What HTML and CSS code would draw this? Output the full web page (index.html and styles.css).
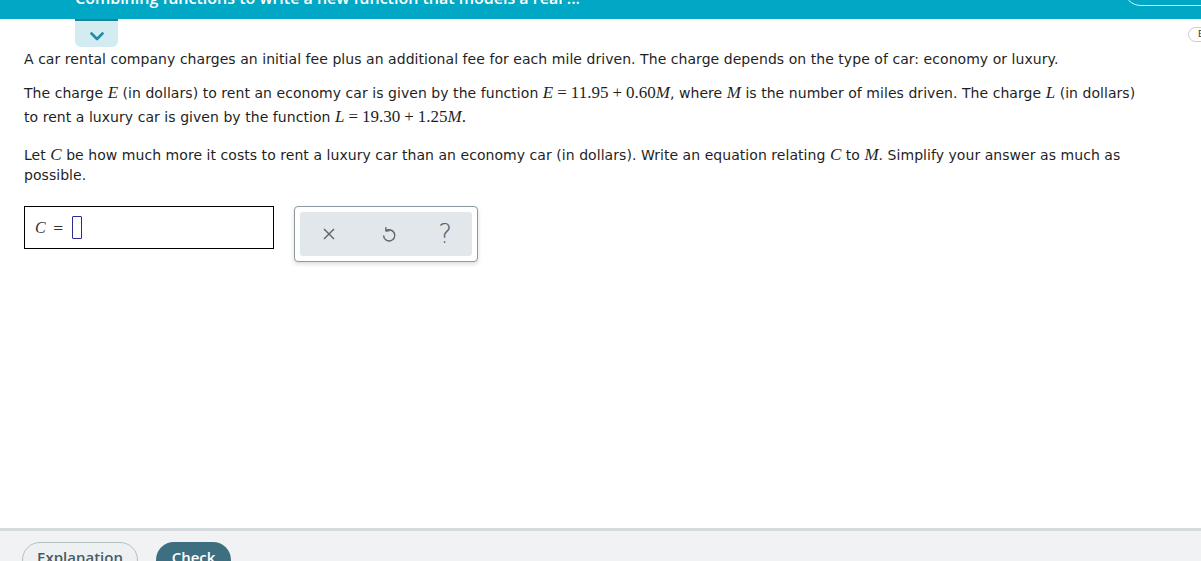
FILE: index.html
```html
<!DOCTYPE html>
<html>
<head>
<meta charset="utf-8">
<link rel="stylesheet" href="styles.css">
</head>
<body>
<div class="page">
  <header class="topbar">
    <div class="title">Combining functions to write a new function that models a real ...</div>
    <div class="top-pill"></div>
  </header>
  <main class="main">
    <div class="tab-row">
      <div class="tab">
        <svg width="14" height="9" viewBox="0 0 14 9"><path d="M1.5 1.5 L7 7 L12.5 1.5" fill="none" stroke="#1b8fa6" stroke-width="2.6" stroke-linecap="round" stroke-linejoin="round"/></svg>
      </div>
      <div class="side-pill">E</div>
    </div>
    <div class="question">
      <p class="p1">A car rental company charges an initial fee plus an additional fee for each mile driven. The charge depends on the type of car: economy or luxury.</p>
      <p class="p2">The charge <span class="m"><i>E</i></span> (in dollars) to rent an economy car is given by the function <span class="m"><i>E</i><span class="op">=</span>11.95<span class="op">+</span>0.60<i>M</i></span>, where <span class="m"><i>M</i></span> is the number of miles driven. The charge <span class="m"><i>L</i></span> (in dollars) to rent a luxury car is given by the function <span class="m"><i>L</i><span class="op">=</span>19.30<span class="op">+</span>1.25<i>M</i>.</span></p>
      <p class="p3">Let <span class="m"><i>C</i></span> be how much more it costs to rent a luxury car than an economy car (in dollars). Write an equation relating <span class="m"><i>C</i></span> to <span class="m"><i>M</i></span>. Simplify your answer as much as possible.</p>
    </div>
    <div class="answer-row">
      <div class="answer-box">
        <span class="m"><i>C</i></span><span class="eq">=</span><span class="cursor"></span>
      </div>
      <div class="tools">
        <div class="tools-inner">
          <svg width="14" height="14" viewBox="0 0 14 14"><path d="M2 2 L12 12 M12 2 L2 12" stroke="#55636b" stroke-width="1.4" fill="none"/></svg>
          <svg width="16" height="20" viewBox="0 0 16 20"><path d="M2.6 11.5 A5.6 5.6 0 1 0 4.9 6.9" stroke="#55636b" stroke-width="1.4" fill="none"/><path d="M4.9 3.2 L4.9 6.9 L8.5 6.9" stroke="#55636b" stroke-width="1.4" fill="none" stroke-linejoin="miter"/></svg>
          <span class="qmark">?</span>
        </div>
      </div>
    </div>
  </main>
  <footer class="footer">
    <button class="btn btn-expl">Explanation</button>
    <button class="btn btn-check">Check</button>
  </footer>
</div>
</body>
</html>
```

FILE: styles.css
```css
html, body {
  margin: 0;
  padding: 0;
  background: #ffffff;
}
body {
  width: 1201px;
  height: 561px;
  overflow: hidden;
}
.page {
  height: 561px;
  display: flex;
  flex-direction: column;
}
.topbar {
  height: 19px;
  background: #00a8c6;
  position: relative;
  overflow: hidden;
  flex: none;
}
.title {
  position: absolute;
  left: 75px;
  top: -13px;
  color: #ffffff;
  font-family: "Open Sans", sans-serif;
  font-size: 16px;
  font-weight: 600;
  line-height: 22px;
  white-space: nowrap;
}
.top-pill {
  position: absolute;
  left: 1123px;
  top: -30px;
  width: 120px;
  height: 34px;
  border: 1.5px solid #d8f3f8;
  border-radius: 18px;
}
.main {
  flex: 1;
  position: relative;
  font-family: "DejaVu Sans", Verdana, sans-serif;
  font-size: 14px;
  color: #1f1f1f;
}
.tab-row {
  height: 30px;
  position: relative;
}
.tab {
  position: absolute;
  left: 75px;
  top: 0;
  width: 43px;
  height: 26px;
  border-top: 2px solid #1b8294;
  background: #d3ecf2;
  border-radius: 0 0 6px 6px;
  display: flex;
  align-items: center;
  justify-content: center;
}
.tab svg { margin-top: 4px; }
.side-pill {
  position: absolute;
  left: 1188px;
  top: 8px;
  width: 30px;
  height: 13px;
  border: 1px solid #c7cdd0;
  border-radius: 8px;
  font-size: 9px;
  line-height: 13px;
  padding-left: 9px;
  color: #333;
  box-sizing: content-box;
}
.question {
  padding: 0 24px;
  width: 1120px;
}
.question p {
  margin: 0;
  letter-spacing: 0.05px;
}
.p1 {
  line-height: 20px;
  margin-bottom: 12px !important;
}
.p2 {
  line-height: 24px;
  margin-bottom: 16px !important;
}
.p3 {
  line-height: 20px;
}
.m {
  font-family: "Liberation Serif", "Times New Roman", serif;
  font-size: 17px;
  letter-spacing: 0;
}
.op {
  margin: 0 4px;
}
.answer-row {
  display: flex;
  align-items: flex-start;
  gap: 20px;
  margin-top: 21px;
  padding-left: 24px;
}
.answer-box {
  width: 250px;
  height: 43px;
  border: 1px solid #000;
  display: flex;
  align-items: center;
  padding-left: 10px;
  box-sizing: border-box;
  color: #333;
}
.answer-box .m { font-size: 16px; }
.eq {
  font-family: "DejaVu Sans", sans-serif;
  font-size: 13px;
  margin: 0 8px 0 7px;
}
.cursor {
  width: 8px;
  height: 21px;
  border: 1px solid #2b2c8f;
  border-radius: 1px;
}
.tools {
  width: 184px;
  height: 56px;
  box-sizing: border-box;
  border: 1px solid #8c9aa1;
  border-radius: 4px;
  padding: 5px;
  background: #fff;
  box-shadow: 0 2px 4px rgba(0,0,0,0.15);
}
.tools-inner {
  height: 100%;
  background: #e1e7ea;
  border-radius: 3px;
  display: flex;
  align-items: center;
  justify-content: space-between;
  padding: 0 20px 0 22px;
  box-sizing: border-box;
}
.tools-inner svg:nth-child(2) { margin-left: 4px; }
.qmark {
  font-family: "DejaVu Sans", sans-serif;
  font-size: 26px;
  font-weight: 200;
  color: #55636b;
  line-height: 1;
}
.footer {
  flex: none;
  height: 19px;
  border-top: 3px solid #d5dbdc;
  background: #f0f2f3;
  display: flex;
  align-items: flex-start;
  gap: 18px;
  padding: 11px 0 0 22px;
  box-sizing: content-box;
  overflow: hidden;
}
.btn {
  font-family: "Open Sans", sans-serif;
  font-size: 15px;
  font-weight: 600;
  height: 36px;
  box-sizing: border-box;
  border-radius: 18px;
  padding: 0 10px 6px;
  line-height: 20px;
  flex: none;
}
.btn-expl {
  width: 116px;
  background: #eef1f2;
  color: #4a5a63;
  border: 1px solid #b7c0c4;
}
.btn-check {
  width: 75px;
  background: #3d6f80;
  color: #ffffff;
  border: none;
}
```
